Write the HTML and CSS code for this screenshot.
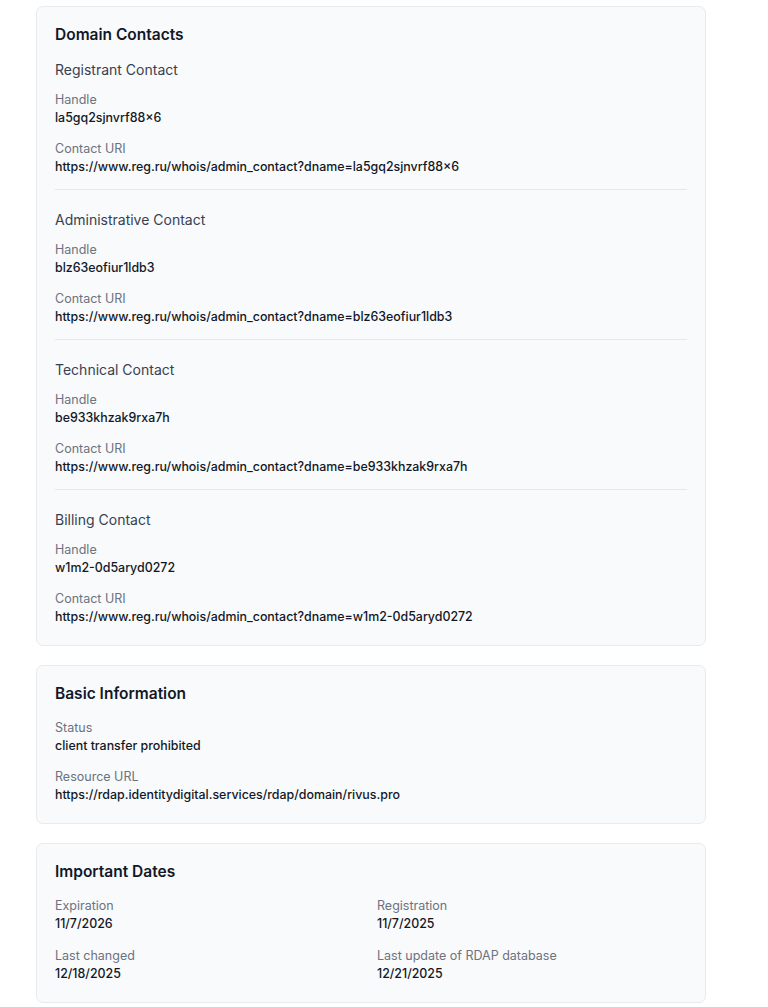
FILE: index.html
```html
<html>
  <head>
    <title>Domain lookup</title>
    <link rel="stylesheet" href="styles.css">
  </head>
  <body>
  <div class="page">

    <div class="card">
      <h2 class="card_title">Domain Contacts</h2>

      <div class="contact">
        <h3 class="contact_title">Registrant Contact</h3>
        <div class="field">
          <div class="label">Handle</div>
          <div class="value">la5gq2sjnvrf88×6</div>
        </div>
        <div class="field">
          <div class="label">Contact URI</div>
          <div class="value">https://www.reg.ru/whois/admin_contact?dname=la5gq2sjnvrf88×6</div>
        </div>
      </div>

      <div class="contact">
        <h3 class="contact_title">Administrative Contact</h3>
        <div class="field">
          <div class="label">Handle</div>
          <div class="value">blz63eofiur1ldb3</div>
        </div>
        <div class="field">
          <div class="label">Contact URI</div>
          <div class="value">https://www.reg.ru/whois/admin_contact?dname=blz63eofiur1ldb3</div>
        </div>
      </div>

      <div class="contact">
        <h3 class="contact_title">Technical Contact</h3>
        <div class="field">
          <div class="label">Handle</div>
          <div class="value">be933khzak9rxa7h</div>
        </div>
        <div class="field">
          <div class="label">Contact URI</div>
          <div class="value">https://www.reg.ru/whois/admin_contact?dname=be933khzak9rxa7h</div>
        </div>
      </div>

      <div class="contact">
        <h3 class="contact_title">Billing Contact</h3>
        <div class="field">
          <div class="label">Handle</div>
          <div class="value">w1m2-0d5aryd0272</div>
        </div>
        <div class="field">
          <div class="label">Contact URI</div>
          <div class="value">https://www.reg.ru/whois/admin_contact?dname=w1m2-0d5aryd0272</div>
        </div>
      </div>
    </div>

    <div class="card">
      <h2 class="card_title">Basic Information</h2>
      <div class="field">
        <div class="label">Status</div>
        <div class="value">client transfer prohibited</div>
      </div>
      <div class="field">
        <div class="label">Resource URL</div>
        <div class="value">https://rdap.identitydigital.services/rdap/domain/rivus.pro</div>
      </div>
    </div>

    <div class="card">
      <h2 class="card_title">Important Dates</h2>
      <div class="dates">
        <div class="field">
          <div class="label">Expiration</div>
          <div class="value">11/7/2026</div>
        </div>
        <div class="field">
          <div class="label">Registration</div>
          <div class="value">11/7/2025</div>
        </div>
        <div class="field">
          <div class="label">Last changed</div>
          <div class="value">12/18/2025</div>
        </div>
        <div class="field">
          <div class="label">Last update of RDAP database</div>
          <div class="value">12/21/2025</div>
        </div>
      </div>
    </div>

  </div>
  </body>
</html>
```

FILE: styles.css
```css
body{
    margin: 0;
    background-color: #ffffff;
    font-family: Inter, "Noto Sans", sans-serif;
    color: #111827;
}
.page{
    width: 670px;
    margin-left: 36px;
    padding-top: 6px;
    display: flex;
    flex-direction: column;
    gap: 19px;
}
.card{
    background-color: #f9fafb;
    border: 1px solid #e8eaed;
    border-radius: 7px;
    padding: 18px 18px 19px 18px;
}
.card_title{
    margin: 0 0 15px 0;
    font-size: 15.5px;
    line-height: 20px;
    font-weight: 600;
    color: #111827;
}
.contact{
    padding-bottom: 13px;
    border-bottom: 1px solid #e5e7eb;
    margin-bottom: 20px;
}
.contact:last-child{
    padding-bottom: 0;
    border-bottom: none;
    margin-bottom: 0;
}
.contact_title{
    margin: 0 0 11px 0;
    font-size: 14px;
    line-height: 20px;
    font-weight: 400;
    color: #374151;
}
.field{
    margin-bottom: 13px;
}
.field:last-child{
    margin-bottom: 0;
}
.label{
    font-size: 12.5px;
    line-height: 18px;
    color: #6b7280;
}
.value{
    font-size: 12.4px;
    line-height: 18px;
    font-weight: 500;
    color: #111827;
}
.dates{
    display: grid;
    grid-template-columns: 1fr 1fr;
    column-gap: 12px;
    row-gap: 14px;
}
.dates .field{
    margin-bottom: 0;
}
```
